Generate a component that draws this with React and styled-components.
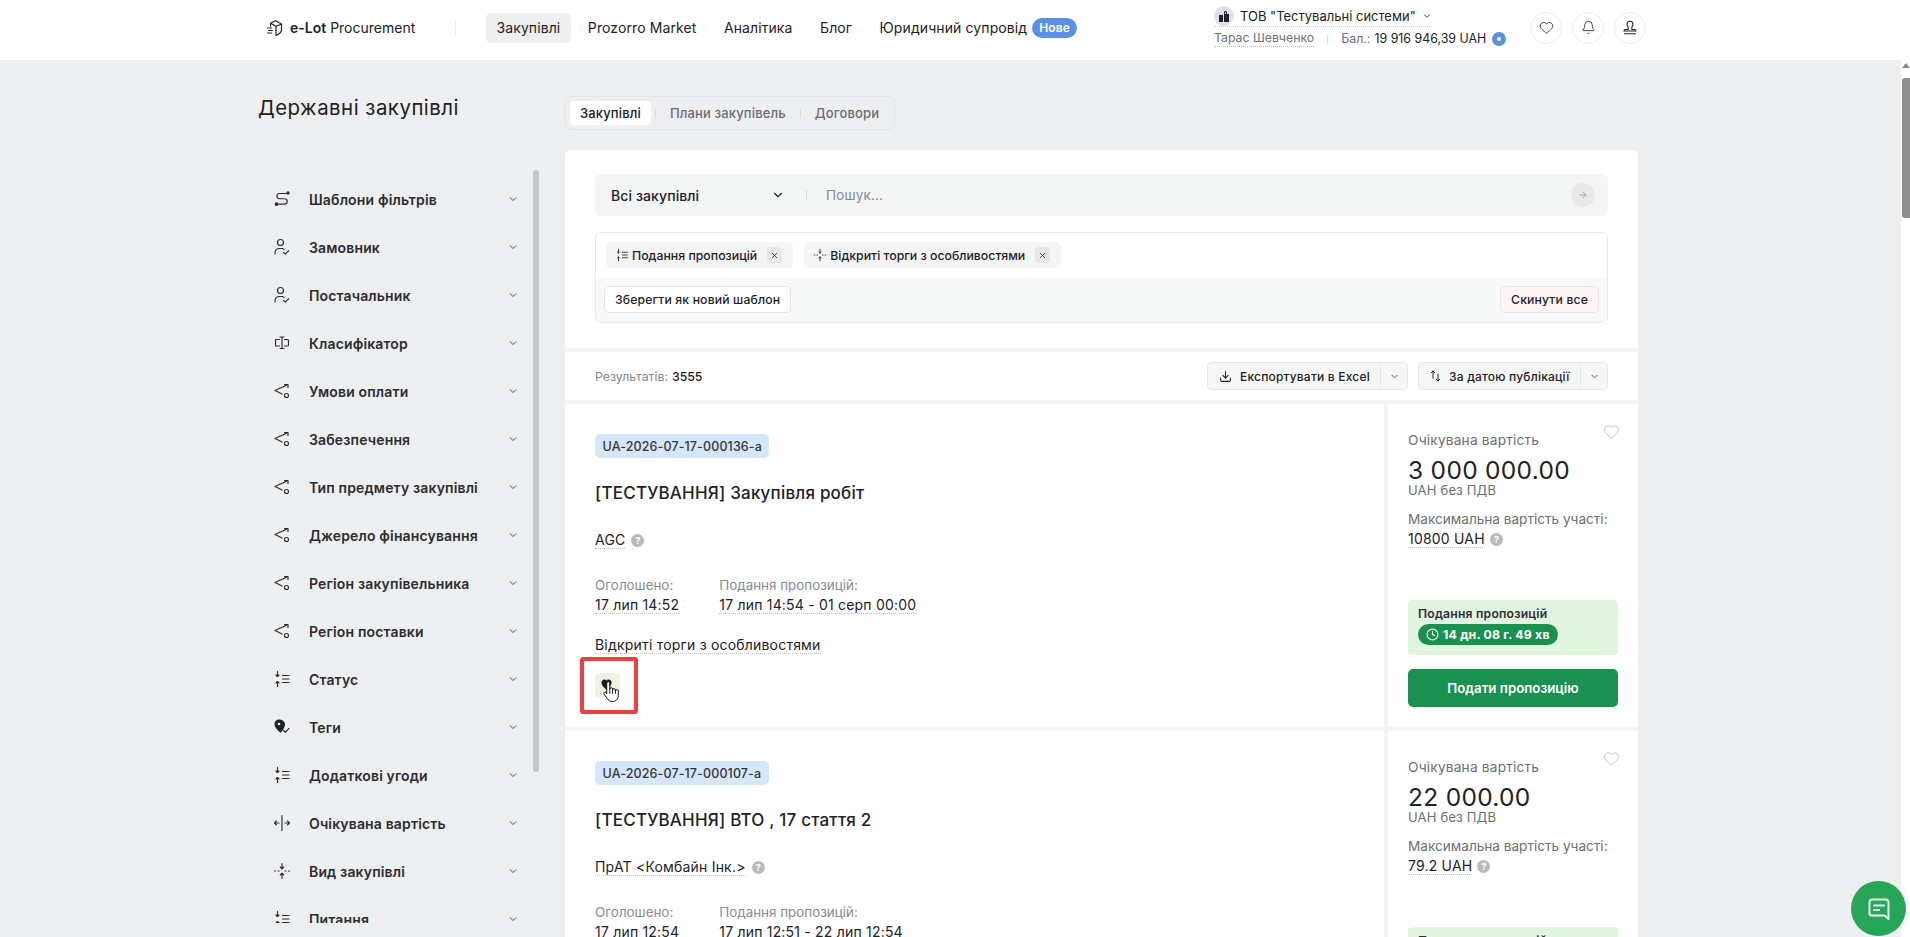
import React from 'react'
import styled, { createGlobalStyle } from 'styled-components'
import { ChevronDown, ArrowRight, Download, X, Heart, Bell, Clock } from 'lucide-react'

const Global = createGlobalStyle`
  html, body { margin: 0; padding: 0; height: 937px; overflow: hidden; }
  body { font-family: Inter, "Noto Sans", sans-serif; color: #1f2124; background: #eeeff1; }
  * { box-sizing: border-box; }
`

const Shell = styled.div`
  display: flex;
  width: 1910px;
  height: 937px;
  overflow: hidden;
`
const Page = styled.div`
  width: 1901px;
  flex: none;
  display: flex;
  flex-direction: column;
`
const PageScroll = styled.div`
  width: 9px;
  flex: none;
  background: #fff;
  padding: 63px 0 0 1px;
`
const ScrollArrow = styled.div`
  width: 0;
  height: 0;
  margin: 0 0 10px;
  border-left: 4px solid transparent;
  border-right: 4px solid transparent;
  border-bottom: 5px solid #8a8a8a;
`
const ScrollThumb = styled.div`
  height: 140px;
  border-radius: 3px 0 0 3px;
  background: #8d8d8d;
`

const Header = styled.header`
  height: 61px;
  flex: none;
  background: #fff;
  display: flex;
  align-items: center;
  padding: 0 0 5px 266px;
  border-bottom: 1px solid #f0f0ee;
`
const Logo = styled.div`
  width: 189px;
  display: flex;
  align-items: center;
  gap: 6px;
  font-size: 14px;
  white-space: nowrap;
  b { font-weight: 600; }
`
const HeaderDivider = styled.span`
  width: 1px;
  height: 16px;
  background: #eee;
  margin-right: 30px;
`
const Nav = styled.nav`
  display: flex;
  align-items: center;
  gap: 6.5px;
  width: 728px;
`
const NavItem = styled.a`
  display: flex;
  align-items: center;
  height: 30px;
  padding: 0 10.5px;
  border-radius: 5px;
  font-size: 14px;
  letter-spacing: 0.1px;
  white-space: nowrap;
  background: ${(p) => (p.$active ? '#eeeff1' : 'transparent')};
`
const NewBadge = styled.span`
  display: inline-flex;
  align-items: center;
  height: 20px;
  margin-left: 5px;
  padding: 0 7px;
  border-radius: 10px;
  background: #5a90e4;
  color: #fff;
  font-size: 12px;
  font-weight: 600;
`
const Account = styled.div`
  width: 316px;
  display: flex;
  flex-direction: column;
  gap: 2px;
  font-size: 13px;
`
const AccountRow = styled.div`
  display: flex;
  align-items: center;
  height: 20px;
`
const Company = styled.span`
  display: flex;
  align-items: center;
  gap: 6px;
  border-bottom: 1px dotted #ccc;
  white-space: nowrap;
`
const Avatar = styled.span`
  width: 20px;
  height: 20px;
  border-radius: 50%;
  background: #dfe2e5;
  display: flex;
  align-items: center;
  justify-content: center;
`
const Person = styled.span`
  color: #6f7276;
  font-size: 12.3px;
  border-bottom: 1px dotted #bbb;
  line-height: 16px;
`
const Sep = styled.span`
  width: 1px;
  height: 8px;
  background: #ddd;
  margin: 0 13px;
`
const Balance = styled.span`
  display: flex;
  align-items: center;
  white-space: nowrap;
  font-size: 12.4px;
  color: #1f2124;
  i { font-style: normal; color: #6f7276; margin-right: 4px; }
`
const PlusDot = styled.span`
  width: 14px;
  height: 14px;
  margin-left: 6px;
  border-radius: 50%;
  background: #5a90e4;
  display: flex;
  align-items: center;
  justify-content: center;
  &::after { content: ""; width: 4px; height: 4px; border-radius: 50%; background: #fff; }
`
const RoundActions = styled.div`
  display: flex;
  gap: 10px;
`
const RoundButton = styled.button`
  width: 32px;
  height: 32px;
  padding: 0;
  border-radius: 50%;
  border: 1px solid #ececec;
  background: #fff;
  color: #222;
  display: flex;
  align-items: center;
  justify-content: center;
`

const Body = styled.div`
  flex: 1;
  min-height: 0;
  display: flex;
  padding: 35px 0 0 258px;
  overflow: hidden;
`
const Sidebar = styled.aside`
  width: 307px;
  flex: none;
`
const PageTitle = styled.h1`
  margin: 0;
  height: 24px;
  font-size: 20.4px;
  line-height: 24px;
  font-weight: 400;
  letter-spacing: 0.5px;
`
const FilterList = styled.div`
  position: relative;
  margin-top: 50px;
  height: 753px;
  width: 281px;
  padding-top: 5px;
  overflow: hidden;
`
const SideScroll = styled.div`
  position: absolute;
  top: 0;
  left: 275px;
  width: 6px;
  height: 602px;
  border-radius: 3px;
  background: #c5c6c8;
`
const FilterRow = styled.div`
  height: 48px;
  display: flex;
  align-items: center;
  padding-left: 15px;
  font-size: 14px;
  font-weight: 600;
  letter-spacing: 0.15px;
  color: #2b2d30;
  span { flex: none; width: 198px; margin-left: 18px; }
  svg { flex: none; }
  svg.chev { color: #555; }
`

const Main = styled.main`
  width: 1073px;
  flex: none;
`
const Tabs = styled.div`
  width: 330px;
  height: 34px;
  padding: 4px;
  display: flex;
  align-items: center;
  border: 1px solid #e3e4e6;
  border-radius: 6px;
  font-size: 13px;
  font-weight: 500;
  letter-spacing: 0.15px;
`
const Tab = styled.div`
  height: 24px;
  display: flex;
  align-items: center;
  padding: 0 10px;
  border-radius: 4px;
  white-space: nowrap;
  color: ${(p) => (p.$active ? '#1f2124' : '#6a6d71')};
  background: ${(p) => (p.$active ? '#fff' : 'transparent')};
`
const TabSep = styled.span`
  width: 1px;
  height: 10px;
  background: #dcdde0;
  margin: 0 4px;
`
const Stack = styled.div`
  margin-top: 20px;
  display: flex;
  flex-direction: column;
  gap: 4px;
  background: #f3f4f5;
  border-radius: 6px 6px 0 0;
`
const FilterCard = styled.section`
  height: 198px;
  padding: 24px 30px 0;
  background: #fff;
  border-radius: 6px 6px 0 0;
`
const SearchBar = styled.div`
  height: 42px;
  display: flex;
  align-items: center;
  padding: 0 13px 0 16px;
  background: #f4f5f5;
  border-radius: 6px;
`
const SelectLabel = styled.div`
  width: 160px;
  font-size: 14px;
  font-weight: 500;
  letter-spacing: 0.1px;
`
const SearchSep = styled.span`
  width: 1px;
  height: 10px;
  margin: 0 19px 0 21px;
  background: #dcdde0;
`
const SearchText = styled.div`
  flex: 1;
  font-size: 13.5px;
  color: #85888c;
  letter-spacing: 0.2px;
`
const GoButton = styled.span`
  width: 24px;
  height: 24px;
  border-radius: 50%;
  background: #e8e9ea;
  color: #999;
  display: flex;
  align-items: center;
  justify-content: center;
`
const FilterBox = styled.div`
  margin-top: 16px;
  height: 91px;
  border: 1px solid #e8e9eb;
  border-radius: 6px;
  overflow: hidden;
`
const ChipRow = styled.div`
  height: 45px;
  padding: 9px 10px 0;
  display: flex;
  gap: 11px;
`
const Chip = styled.div`
  height: 26px;
  display: flex;
  align-items: center;
  gap: 3px;
  padding: 0 11px 0 9px;
  border-radius: 5px;
  background: #f4f5f5;
  font-size: 12.3px;
  font-weight: 500;
  white-space: nowrap;
`
const ChipClose = styled.span`
  width: 15px;
  height: 16px;
  margin-left: 7px;
  border-radius: 3px;
  background: #e6e7e9;
  display: flex;
  align-items: center;
  justify-content: center;
`
const BoxFooter = styled.div`
  height: 45px;
  padding: 8px 8px 0;
  display: flex;
  justify-content: space-between;
  background: #f7f8f8;
`
const GhostButton = styled.button`
  height: 27px;
  padding: 0 10px;
  border-radius: 5px;
  font: 500 12.2px Inter, sans-serif;
  letter-spacing: 0.15px;
  color: #1f2124;
  border: 1px solid ${(p) => (p.$danger ? '#f7dfda' : '#e4e5e7')};
  background: ${(p) => (p.$danger ? '#fdf6f4' : '#fff')};
`
const ResultBar = styled.div`
  height: 48px;
  padding: 0 30px;
  display: flex;
  align-items: center;
  background: #fff;
  font-size: 12.3px;
  font-weight: 500;
  i { font-style: normal; font-weight: 400; color: #85888c; margin-right: 4px; }
`
const ResultCount = styled.div`
  flex: 1;
`
const SplitButton = styled.div`
  height: 28px;
  margin-left: 10px;
  display: flex;
  align-items: center;
  border: 1px solid #e5e6e8;
  border-radius: 4px;
  background: #f6f7f7;
  font-size: 12px;
  font-weight: 500;
  letter-spacing: 0.2px;
`
const SplitMain = styled.div`
  width: ${(p) => p.$w}px;
  flex: none;
  display: flex;
  align-items: center;
  gap: 8px;
  padding-left: 11px;
  white-space: nowrap;
`
const SplitCaret = styled.div`
  width: 27px;
  height: 100%;
  flex: none;
  border-left: 1px solid #e5e6e8;
  color: #555;
  display: flex;
  align-items: center;
  justify-content: center;
`

const TenderRow = styled.article`
  height: 323px;
  flex: none;
  display: flex;
  gap: 4px;
`
const TenderInfo = styled.div`
  width: 819px;
  padding: 30px;
  background: #fff;
`
const TenderId = styled.span`
  display: inline-flex;
  align-items: center;
  height: 24px;
  padding: 0 7.5px;
  border-radius: 5px;
  background: #d6e6fb;
  font-size: 12.5px;
  font-weight: 500;
  letter-spacing: 0.12px;
  color: #33363a;
`
const TenderTitle = styled.h2`
  margin: 23px 0 0;
  font-size: 17px;
  line-height: 24px;
  font-weight: 500;
  letter-spacing: 0.2px;
`
const BuyerRow = styled.div`
  margin-top: 25px;
  height: 20px;
  display: flex;
  align-items: center;
  gap: 6px;
  font-size: 14px;
`
const Dotted = styled.span`
  border-bottom: 1px dotted #c2c2c2;
  line-height: 17px;
  letter-spacing: 0.2px;
`
const Help = styled.span`
  width: 13px;
  height: 13px;
  border-radius: 50%;
  background: #b9babc;
  color: #fff;
  font-size: 9.5px;
  font-weight: 700;
  line-height: 13px;
  text-align: center;
`
const Dates = styled.div`
  margin-top: 26px;
  display: flex;
  gap: 40px;
`
const DateCol = styled.div`
  display: flex;
  flex-direction: column;
  align-items: flex-start;
  gap: 2px;
  font-size: 14px;
  line-height: 18px;
  letter-spacing: 0.35px;
  label { color: #8a8d91; font-size: 13.4px; letter-spacing: 0; }
`
const TenderType = styled.div`
  margin-top: 22px;
  height: 18px;
  font-size: 14px;
`
const TagWrap = styled.div`
  position: relative;
  margin-top: 19px;
  width: 25px;
  height: 24px;
`
const TagButton = styled.span`
  width: 25px;
  height: 24px;
  padding: 5px 0 0 5px;
  border-radius: 4px;
  background: #f5f0e4;
  display: block;
  line-height: 0;
`
const Highlight = styled.div`
  position: absolute;
  left: -15px;
  top: -16px;
  width: 58px;
  height: 57px;
  border: 4px solid #ef4040;
  border-radius: 3px;
`
const HandCursor = styled.div`
  position: absolute;
  left: 7px;
  top: 6px;
  line-height: 0;
`
const TenderPrice = styled.div`
  position: relative;
  width: 250px;
  padding: 27px 20px 20px;
  display: flex;
  flex-direction: column;
  background: #fff;
`
const Favorite = styled.span`
  position: absolute;
  top: 19px;
  right: 18px;
  color: #bcbdbf;
  line-height: 0;
`
const PriceLabel = styled.div`
  font-size: 13.7px;
  line-height: 18px;
  color: #6c6f73;
  letter-spacing: 0.2px;
`
const PriceValue = styled.div`
  margin-top: 6px;
  font-size: 24.5px;
  line-height: 30px;
  letter-spacing: 0.3px;
`
const PriceSub = styled(PriceLabel)`
  margin-top: -4px;
  font-size: 13px;
`
const PriceMaxLabel = styled(PriceLabel)`
  margin-top: 11px;
  font-size: 13.6px;
  letter-spacing: 0;
  white-space: nowrap;
`
const PriceMax = styled.div`
  margin-top: 2px;
  display: flex;
  align-items: center;
  gap: 5px;
  font-size: 14px;
  line-height: 18px;
`
const StatusBox = styled.div`
  margin-top: auto;
  height: 55px;
  padding: 6px 10px;
  border-radius: 4px;
  background: #e2f5df;
  font-size: 12.2px;
  font-weight: 600;
  letter-spacing: 0.2px;
  color: #2c2f32;
`
const Countdown = styled.div`
  display: inline-flex;
  align-items: center;
  gap: 4px;
  height: 21px;
  margin-top: 3px;
  padding: 0 8px;
  border-radius: 11px;
  background: #1a9150;
  color: #fff;
  font-size: 12.3px;
  font-weight: 700;
`
const SubmitButton = styled.button`
  margin-top: 14px;
  height: 38px;
  flex: none;
  border: 0;
  border-radius: 5px;
  background: #1a9150;
  color: #fff;
  font: 600 13.3px Inter, sans-serif;
`
const ChatBubble = styled.button`
  position: fixed;
  left: 1851px;
  top: 881px;
  width: 55px;
  height: 55px;
  padding: 0;
  border: 0;
  border-radius: 50%;
  background: #27a65a;
  display: flex;
  align-items: center;
  justify-content: center;
`

const Ico = ({ children, size = 18 }) => (
  <svg width={size} height={size} viewBox="0 0 18 18" fill="none" stroke="#2b2d30" strokeWidth="1.15" strokeLinecap="round" strokeLinejoin="round">
    {children}
  </svg>
)
const TemplateIcon = () => (
  <Ico>
    <path d="M13.500 3.500H6.500a2.600 2.600 0 0 0 0 5.200h5a2.700 2.700 0 0 1 0 5.400H5.500" />
    <circle cx="15" cy="3" r="1.100" fill="#2b2d30" />
    <circle cx="3.500" cy="14" r="1.300" fill="#2b2d30" />
  </Ico>
)
const PersonCheckIcon = () => (
  <Ico>
    <circle cx="7.500" cy="4.500" r="3" />
    <path d="M2 16v-1.500a4 4 0 0 1 4-4h3c.8 0 1.500.3 2 .8" />
    <path d="M10.500 14.500l1.800 1.700 3.400-3.600" />
  </Ico>
)
const ClassifierIcon = () => (
  <Ico>
    <path d="M6.500 5.500H2.500v6.500h4M11.500 5.500h3a1 1 0 0 1 1 1v4.500a1 1 0 0 1-1 1h-3M7 3h4M7 14.500h4M9 3v11.500" />
  </Ico>
)
const ConditionIcon = () => (
  <Ico>
    <path d="M14 3 2 8.500l7 3.500" />
    <path d="M11.500 2.500H15v3" />
    <circle cx="13.500" cy="13.500" r="2" />
  </Ico>
)
const StatusIcon = ({ size }) => (
  <Ico size={size}>
    <path d="M4.500 1.500v5M3 5 4.500 6.500 6 5M4.500 16.500v-5M3 13l1.500-1.500L6 13M9.500 5.500h6.500M9.500 9h6.500M9.500 12.500h6.500" />
  </Ico>
)
const TagCheckIcon = () => (
  <Ico>
    <path d="M6.200 2C3.800 2 2 3.800 2 6c0 2.800 2.500 5.500 5.500 8 .8-.8 1.500-1.500 2-2.300L11 8.500c.3-.8.500-1.600.4-2.500C11.300 3.800 8.800 2 6.200 2Z" fill="#1f2124" stroke="#1f2124" />
    <circle cx="6" cy="6" r="1.300" fill="#eeeff1" stroke="none" />
    <path d="M10.500 12.500l1.800 1.800 3.700-4" />
  </Ico>
)
const RangeIcon = () => (
  <Ico>
    <path d="M9 1.500v15M1.500 9H6M3.500 7l-2 2 2 2M12 9h4.500M14.500 7l2 2-2 2" />
  </Ico>
)
const KindIcon = ({ size }) => (
  <Ico size={size}>
    <path d="M9 1.500v5M7.300 5 9 6.800 10.700 5M9 16.500v-5M7.300 13 9 11.200l1.700 1.800M1.500 9h1M5 9h1M12 9h1M15.500 9h1" />
  </Ico>
)
const LogoIcon = () => (
  <svg width="18" height="18" viewBox="0 0 18 18" fill="none" stroke="#222" strokeWidth="1.2" strokeLinejoin="round" strokeLinecap="round">
    <path d="M9.500 1.800 15.500 5v5.500c0 2.500-2.500 4.800-5.500 6M9.500 1.800 4.500 4.200v3M4.500 4.200 10 7.200l5.500-2.200M10 7.200v9.300" />
    <path d="M1.500 9h4M2.500 11.500h4M1.500 14h4" />
  </svg>
)
const StampIcon = () => (
  <svg width="16" height="16" viewBox="0 0 16 16" fill="none" stroke="#222" strokeWidth="1.1" strokeLinecap="round" strokeLinejoin="round">
    <path d="M5 4.200a3 3 0 0 1 6 0c0 1.600-1.200 2.200-1.200 3.800v1.500h2.700c.8 0 1.500.6 1.500 1.500H2c0-.9.700-1.500 1.500-1.500h2.700V8C6.200 6.400 5 5.800 5 4.200ZM2.500 13.800h11" />
  </svg>
)
const BuildingIcon = () => (
  <svg width="12" height="13" viewBox="0 0 12 13" fill="#222">
    <path d="M1 5h4v7H1zM6 2.500c0-1 .6-1.500 1.500-1.500S9 1.500 9 2.500V4h2v8H6zM7 4h1V2.500C8 2 7 2 7 2.500z" />
  </svg>
)
const SortIcon = () => (
  <svg width="11" height="12" viewBox="0 0 11 12" fill="none" stroke="#222" strokeWidth="1" strokeLinecap="round" strokeLinejoin="round" style={{ flex: 'none' }}>
    <path d="M3 8V1M1.200 2.800 3 1l1.800 1.800M8 4v7M6.200 9.200 8 11l1.800-1.800" />
  </svg>
)
const HandIcon = () => (
  <svg width="18" height="25" viewBox="0 0 19 24" fill="#fff" stroke="#111" strokeWidth="1" strokeLinecap="round" strokeLinejoin="round">
    <path d="M5 14V3.200a1.600 1.600 0 0 1 3.200 0V9.500a1.500 1.500 0 0 1 3 0v1a1.500 1.500 0 0 1 3 0v1a1.500 1.500 0 0 1 3 0V16c0 4-2.500 6.500-6 6.500-3 0-4.500-1-6-3.500L2 14.500c-.8-1.300 1-2.800 2.200-1.500Z" />
    <path d="M8.200 9.500V14M11.200 10.500V14M14.200 11.500V14" />
  </svg>
)
const ChatIcon = () => (
  <svg width="24" height="24" viewBox="0 0 24 24" fill="none" stroke="#eaf7ef" strokeWidth="2" strokeLinecap="round" strokeLinejoin="round">
    <path d="M5 2.500h14a2.500 2.500 0 0 1 2.500 2.500v17l-4-3.500H5A2.500 2.500 0 0 1 2.500 16V5A2.500 2.500 0 0 1 5 2.500Z" />
    <path d="M7 8.500h10M7 13h5" />
  </svg>
)

const filters = [
  ['Шаблони фільтрів', TemplateIcon],
  ['Замовник', PersonCheckIcon],
  ['Постачальник', PersonCheckIcon],
  ['Класифікатор', ClassifierIcon],
  ['Умови оплати', ConditionIcon],
  ['Забезпечення', ConditionIcon],
  ['Тип предмету закупівлі', ConditionIcon],
  ['Джерело фінансування', ConditionIcon],
  ['Регіон закупівельника', ConditionIcon],
  ['Регіон поставки', ConditionIcon],
  ['Статус', StatusIcon],
  ['Теги', TagCheckIcon],
  ['Додаткові угоди', StatusIcon],
  ['Очікувана вартість', RangeIcon],
  ['Вид закупівлі', KindIcon],
  ['Питання', StatusIcon],
]

const tenders = [
  {
    id: 'UA-2026-07-17-000136-a',
    title: '[ТЕСТУВАННЯ] Закупівля робіт',
    buyer: 'AGC',
    announced: '17 лип 14:52',
    period: '17 лип 14:54 - 01 серп 00:00',
    price: '3 000 000.00',
    max: '10800 UAH',
    tagged: true,
  },
  {
    id: 'UA-2026-07-17-000107-a',
    title: '[ТЕСТУВАННЯ] ВТО , 17 стаття 2',
    buyer: 'ПрАТ <Комбайн Інк.>',
    announced: '17 лип 12:54',
    period: '17 лип 12:51 - 22 лип 12:54',
    price: '22 000.00',
    max: '79.2 UAH',
  },
]

const Tender = ({ t }) => (
  <TenderRow>
    <TenderInfo>
      <TenderId>{t.id}</TenderId>
      <TenderTitle>{t.title}</TenderTitle>
      <BuyerRow>
        <Dotted>{t.buyer}</Dotted>
        <Help>?</Help>
      </BuyerRow>
      <Dates>
        <DateCol>
          <label>Оголошено:</label>
          <Dotted>{t.announced}</Dotted>
        </DateCol>
        <DateCol>
          <label>Подання пропозицій:</label>
          <Dotted>{t.period}</Dotted>
        </DateCol>
      </Dates>
      <TenderType>
        <Dotted>Відкриті торги з особливостями</Dotted>
      </TenderType>
      {t.tagged && (
        <TagWrap>
          <TagButton>
            <svg width="13" height="13" viewBox="0 0 14 14">
              <path d="M7 13C4 10 1.500 7.500 1.500 4.800 1.500 3 3 1.500 4.700 1.500c1 0 1.800.5 2.300 1.200.5-.7 1.300-1.200 2.300-1.200 1.700 0 3.200 1.500 3.200 3.300C12.500 7.500 10 10 7 13Z" fill="#1c1c1c" />
            </svg>
          </TagButton>
          <Highlight />
          <HandCursor>
            <HandIcon />
          </HandCursor>
        </TagWrap>
      )}
    </TenderInfo>
    <TenderPrice>
      <Favorite>
        <Heart size={17} strokeWidth={1.2} />
      </Favorite>
      <PriceLabel>Очікувана вартість</PriceLabel>
      <PriceValue>{t.price}</PriceValue>
      <PriceSub>UAH без ПДВ</PriceSub>
      <PriceMaxLabel>Максимальна вартість участі:</PriceMaxLabel>
      <PriceMax>
        <Dotted>{t.max}</Dotted>
        <Help>?</Help>
      </PriceMax>
      <StatusBox>
        Подання пропозицій
        <div>
          <Countdown>
            <Clock size={13} strokeWidth={2} />
            14 дн. 08 г. 49 хв
          </Countdown>
        </div>
      </StatusBox>
      <SubmitButton>Подати пропозицію</SubmitButton>
    </TenderPrice>
  </TenderRow>
)

export default function App() {
  return (
    <Shell>
      <Global />
      <Page>
        <Header>
          <Logo>
            <LogoIcon />
            <span>
              <b>e-Lot</b> Procurement
            </span>
          </Logo>
          <HeaderDivider />
          <Nav>
            <NavItem $active>Закупівлі</NavItem>
            <NavItem>Prozorro Market</NavItem>
            <NavItem>Аналітика</NavItem>
            <NavItem>Блог</NavItem>
            <NavItem>
              Юридичний супровід
              <NewBadge>Нове</NewBadge>
            </NavItem>
          </Nav>
          <Account>
            <AccountRow>
              <Company>
                <Avatar>
                  <BuildingIcon />
                </Avatar>
                ТОВ "Тестувальні системи"
                <ChevronDown size={10} />
              </Company>
            </AccountRow>
            <AccountRow>
              <Person>Тарас Шевченко</Person>
              <Sep />
              <Balance>
                <i>Бал.:</i> 19 916 946,39 UAH
                <PlusDot />
              </Balance>
            </AccountRow>
          </Account>
          <RoundActions>
            <RoundButton>
              <Heart size={15} strokeWidth={1.3} />
            </RoundButton>
            <RoundButton>
              <Bell size={15} strokeWidth={1.3} />
            </RoundButton>
            <RoundButton>
              <StampIcon />
            </RoundButton>
          </RoundActions>
        </Header>
        <Body>
          <Sidebar>
            <PageTitle>Державні закупівлі</PageTitle>
            <FilterList>
              {filters.map(([name, Icon]) => (
                <FilterRow key={name}>
                  <Icon />
                  <span>{name}</span>
                  <ChevronDown className="chev" size={12} />
                </FilterRow>
              ))}
              <SideScroll />
            </FilterList>
          </Sidebar>
          <Main>
            <Tabs>
              <Tab $active>Закупівлі</Tab>
              <TabSep />
              <Tab>Плани закупівель</Tab>
              <TabSep />
              <Tab>Договори</Tab>
            </Tabs>
            <Stack>
              <FilterCard>
                <SearchBar>
                  <SelectLabel>Всі закупівлі</SelectLabel>
                  <ChevronDown size={14} />
                  <SearchSep />
                  <SearchText>Пошук...</SearchText>
                  <GoButton>
                    <ArrowRight size={10} />
                  </GoButton>
                </SearchBar>
                <FilterBox>
                  <ChipRow>
                    <Chip>
                      <StatusIcon size={14} />
                      Подання пропозицій
                      <ChipClose>
                        <X size={9} />
                      </ChipClose>
                    </Chip>
                    <Chip>
                      <KindIcon size={14} />
                      Відкриті торги з особливостями
                      <ChipClose>
                        <X size={9} />
                      </ChipClose>
                    </Chip>
                  </ChipRow>
                  <BoxFooter>
                    <GhostButton>Зберегти як новий шаблон</GhostButton>
                    <GhostButton $danger>Скинути все</GhostButton>
                  </BoxFooter>
                </FilterBox>
              </FilterCard>
              <ResultBar>
                <ResultCount>
                  <i>Результатів:</i>3555
                </ResultCount>
                <SplitButton>
                  <SplitMain $w={172}>
                    <Download size={13} />
                    Експортувати в Excel
                  </SplitMain>
                  <SplitCaret>
                    <ChevronDown size={11} />
                  </SplitCaret>
                </SplitButton>
                <SplitButton>
                  <SplitMain $w={161}>
                    <SortIcon />
                    За датою публікації
                  </SplitMain>
                  <SplitCaret>
                    <ChevronDown size={11} />
                  </SplitCaret>
                </SplitButton>
              </ResultBar>
              {tenders.map((t) => (
                <Tender key={t.id} t={t} />
              ))}
            </Stack>
          </Main>
        </Body>
      </Page>
      <PageScroll>
        <ScrollArrow />
        <ScrollThumb />
      </PageScroll>
      <ChatBubble>
        <ChatIcon />
      </ChatBubble>
    </Shell>
  )
}
